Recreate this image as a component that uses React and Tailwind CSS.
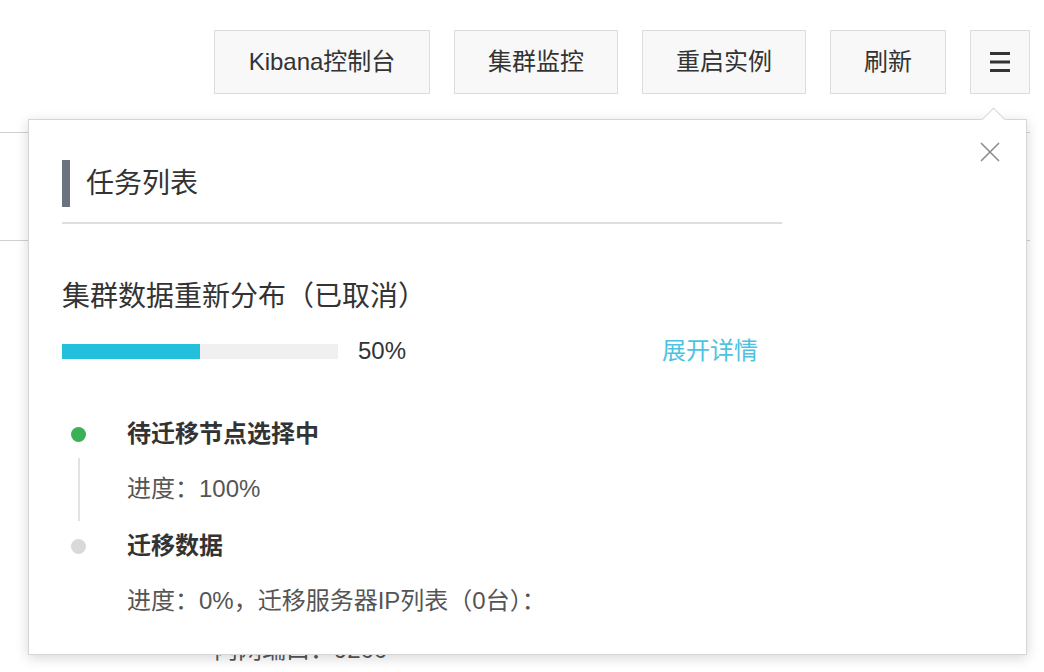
import React from "react";

const FONT = { fontFamily: '"Liberation Sans", "Noto Sans CJK SC", sans-serif' };

const buttons = [
  { label: "Kibana控制台", w: "w-[216px]" },
  { label: "集群监控", w: "w-[164px]" },
  { label: "重启实例", w: "w-[164px]" },
  { label: "刷新", w: "w-[116px]" },
];

function MenuIcon() {
  return (
    <svg width="22" height="22" viewBox="0 0 22 22">
      <rect x="1" y="1" width="20" height="3" fill="#333" />
      <rect x="1" y="9.5" width="20" height="3" fill="#333" />
      <rect x="1" y="18" width="20" height="3" fill="#333" />
    </svg>
  );
}

function Step({ done, title, detail, last }) {
  return (
    <div className="flex">
      <div className="w-[65px] flex flex-col">
        <div className="h-[36px] flex items-center">
          <div className={`ml-[9px] w-[15px] h-[15px] rounded-full ${done ? "bg-[#3bb155]" : "bg-[#d9d9d9]"}`}></div>
        </div>
        {!last && <div className="ml-[16px] w-[2px] mt-[6px] mb-[7px] flex-1 bg-[#e3e3e3]"></div>}
      </div>
      <div className="flex flex-col">
        <div className="h-[36px] flex items-center text-[24px] font-bold text-[#333]">{title}</div>
        <div className="mt-[19px] h-[36px] flex items-center text-[24px] text-[#555]">{detail}</div>
        {!last && <div className="h-[21px]"></div>}
      </div>
    </div>
  );
}

export default function App() {
  return (
    <div className="relative w-[1044px] h-[672px] bg-white overflow-hidden" style={FONT}>
      {/* page behind the popover */}
      <div className="w-[1030px]">
        <div className="flex justify-end gap-[24px] pt-[30px]">
          {buttons.map((b) => (
            <div
              key={b.label}
              className={`${b.w} h-[64px] flex items-center justify-center bg-[#f8f8f8] border border-[#dcdcdc] text-[24px] text-[#333]`}
            >
              {b.label}
            </div>
          ))}
          <div className="w-[60px] h-[64px] flex items-center justify-center bg-[#f8f8f8] border border-[#dcdcdc]">
            <MenuIcon />
          </div>
        </div>
        <div className="mt-[38px] h-px bg-[#d0d0d0]"></div>
        <div className="mt-[107px] h-px bg-[#d0d0d0]"></div>
        <div className="mt-[391px] ml-[214px] h-[36px] flex items-center text-[24px] text-[#555]">
          内网端口：9200
        </div>
      </div>

      {/* task popover */}
      <div className="absolute left-[28px] top-[119px] w-[999px] h-[536px] bg-white border border-[#d6d6d6] shadow-[0_3px_12px_rgba(0,0,0,0.16)]">
        <div className="absolute -top-[9px] left-[956px] w-[17px] h-[17px] rotate-45 bg-white border-t border-l border-[#d6d6d6]"></div>
        <button className="absolute left-[950px] top-[21px] w-[22px] h-[22px] flex items-center justify-center">
          <svg width="22" height="22" viewBox="0 0 22 22">
            <path d="M2 2 L20 20 M20 2 L2 20" stroke="#8c8c8c" strokeWidth="1.6" fill="none" />
          </svg>
        </button>

        <div className="pt-[40px] pl-[33px]">
          <div className="flex items-center h-[47px]">
            <div className="w-[8px] h-full bg-[#6b7380]"></div>
            <div className="ml-[16px] text-[28px] text-[#333]">任务列表</div>
          </div>
          <div className="mt-[15px] w-[720px] h-[2px] bg-[#dedede]"></div>

          <div className="mt-[53px] h-[40px] flex items-center text-[28px] text-[#333]">
            集群数据重新分布（已取消）
          </div>

          <div className="mt-[14px] w-[696px] h-[40px] flex items-center">
            <div className="w-[276px] h-[15px] bg-[#f0f0f0]">
              <div className="h-full bg-[#22c0dc]" style={{ width: "50%" }}></div>
            </div>
            <div className="ml-[20px] text-[24px] text-[#333]">50%</div>
            <div className="ml-auto text-[24px] text-[#4dc3df]">展开详情</div>
          </div>

          <div className="mt-[45px]">
            <Step done title="待迁移节点选择中" detail="进度：100%" />
            <Step title="迁移数据" detail="进度：0%，迁移服务器IP列表（0台）：" last />
          </div>
        </div>
      </div>
    </div>
  );
}
